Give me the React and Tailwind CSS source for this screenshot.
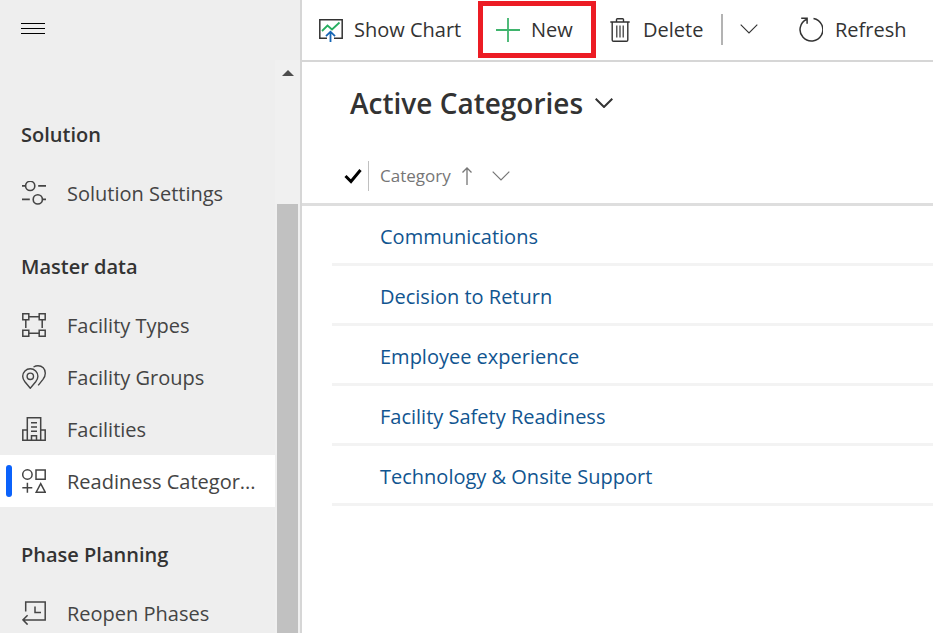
function Icon({ children, className = "", w = 24, h = 24, sw = 1.4 }) {
  return (
    <svg
      className={"shrink-0 " + className}
      width={w}
      height={h}
      viewBox={`0 0 ${w} ${h}`}
      fill="none"
      stroke="currentColor"
      strokeWidth={sw}
      aria-hidden="true"
    >
      {children}
    </svg>
  );
}

const SettingsIcon = () => (
  <Icon sw={1.6}>
    <circle cx="8.200" cy="4.900" r="4.600" />
    <path d="M0 4.900h3.600M16.200 4.900H24" />
    <circle cx="15.800" cy="18.400" r="4.600" />
    <path d="M0 18.400h7.800M20.400 18.400H24" />
  </Icon>
);

const TypesIcon = () => (
  <Icon sw={1.5}>
    <path d="M.8.8h6v6h-6zM17.2.8h6v6h-6zM.8 17.2h6v6h-6zM17.2 17.2h6v6h-6z" />
    <path d="M6.800 3.800h10.400M6.800 20.200h10.400M3.800 6.800v8.200M20.200 6.800v8.200" />
  </Icon>
);

const PinsIcon = () => (
  <Icon>
    <path d="M8.3 23.2L2.9 16.8C1.4 14.900.7 13.4.7 11.300a7.600 7.600 0 0 1 15.200 0c0 2.100-.7 3.600-2.200 5.500z" />
    <circle cx="8.3" cy="11.300" r="3.200" />
    <path d="M11.500 2C13.200 1 14.600.7 16 .7c4.200 0 7.300 3.200 7.300 7.500 0 2.400-.8 4.200-2.300 6.200l-4.800 6" />
  </Icon>
);

const BuildingIcon = () => (
  <Icon sw={1.5}>
    <path d="M5.300 23.200V.8h13.400v22.400M5.300 13H.8v10.200h22.400V13h-4.500" />
    <path d="M9 5.700h6M9 10h6M9 14.300h6M9.500 23v-4.300h5V23" />
  </Icon>
);

const ShapesIcon = () => (
  <Icon sw={1.5}>
    <circle cx="5.400" cy="5.500" r="4.700" />
    <path d="M14 .9h9.200v9.300H14zM5.400 13.700v10M.3 18.700h10M18.700 14.700l4.500 8.500h-9z" />
  </Icon>
);

const ReopenIcon = () => (
  <Icon sw={1.5}>
    <path d="M3.700 10.500V.9h19.500v18H1M5.600 14.200L.9 18.900l4.700 4.700M13 5.500v6h6" />
  </Icon>
);

const Chevron = ({ sw = 1.2, className = "" }) => (
  <Icon w={18} h={10} sw={sw} className={className}>
    <path d="M.7.7L9 9 17.300.7" />
  </Icon>
);

const sections = [
  { title: "Solution", items: [{ label: "Solution Settings", icon: SettingsIcon }] },
  {
    title: "Master data",
    items: [
      { label: "Facility Types", icon: TypesIcon },
      { label: "Facility Groups", icon: PinsIcon },
      { label: "Facilities", icon: BuildingIcon },
      { label: "Readiness Categor...", icon: ShapesIcon, active: true },
    ],
  },
  { title: "Phase Planning", items: [{ label: "Reopen Phases", icon: ReopenIcon }] },
];

const categories = [
  "Communications",
  "Decision to Return",
  "Employee experience",
  "Facility Safety Readiness",
  "Technology & Onsite Support",
];

function Sidebar() {
  return (
    <aside className="flex w-[302px] shrink-0 flex-col border-r-2 border-[#d6d6d6] bg-[#eeeeee]">
      <div className="flex h-[60px] shrink-0 items-start px-[21px] pt-[23px]">
        <button type="button" aria-label="Site map" className="flex w-6 flex-col gap-1">
          <span className="h-px w-full bg-black" />
          <span className="h-px w-full bg-black" />
          <span className="h-px w-full bg-black" />
        </button>
      </div>
      <div className="flex min-h-0 flex-1">
        <nav className="flex min-w-0 flex-1 flex-col gap-4 overflow-hidden pt-[43px]">
          {sections.map((s) => (
            <section key={s.title} className="shrink-0">
              <h2 className="flex h-16 items-center px-[21px] text-[20px] font-semibold text-[#333333]">
                {s.title}
              </h2>
              <ul>
                {s.items.map(({ label, icon: Glyph, active }) => (
                  <li key={label}>
                    <a
                      href="#"
                      aria-current={active ? "page" : undefined}
                      className={
                        "relative flex h-[52px] items-center gap-[21px] pl-[22px] text-[20px] text-[#444444] " +
                        (active ? "bg-white" : "")
                      }
                    >
                      {active && (
                        <span className="absolute top-[10px] left-[6px] h-8 w-[6px] rounded-full bg-[#0b62fb]" />
                      )}
                      <Glyph />
                      <span className="pt-[2px] whitespace-nowrap">{label}</span>
                    </a>
                  </li>
                ))}
              </ul>
            </section>
          ))}
        </nav>
        <div className="flex w-[25px] flex-col bg-[#f0f0f0] pr-[2px] pl-[2px]">
          <div className="flex h-[144px] shrink-0 items-start justify-center pt-[10px]">
            <svg width="12" height="6" viewBox="0 0 12 6" aria-hidden="true">
              <path d="M6 0l6 6H0z" fill="#4d4d4d" />
            </svg>
          </div>
          <div className="flex-1 bg-[#c1c1c1]" />
        </div>
      </div>
    </aside>
  );
}

function Toolbar() {
  return (
    <div className="flex h-[62px] shrink-0 items-center border-b-2 border-[#d6d6d6] pb-px pl-[17px] text-[20px] whitespace-nowrap text-[#333333]">
      <button type="button" className="flex w-[159px] items-center gap-[11px]">
        <Icon sw={1.5}>
          <path d="M8 20.200H.8V1.800h22.400v18.400H15" />
          <path d="M3 13l5.500-5.500 4.500 4 7.500-7" stroke="#27ae60" strokeWidth="1.800" />
          <path d="M11.500 24V14M7 18.200l4.500-4.500 4.500 4.500" stroke="#1565b5" strokeWidth="1.800" />
        </Icon>
        Show Chart
      </button>
      <button
        type="button"
        className="flex h-[57px] w-[118px] items-center gap-[11px] border-[5px] border-[#ec1c24] pl-[13px]"
      >
        <Icon sw={1.8} className="text-[#3fb46d]">
          <path d="M12 0v24M0 12h24" />
        </Icon>
        New
      </button>
      <button type="button" className="ml-[14px] flex w-[111px] items-center gap-[13px]">
        <Icon w={20}>
          <path d="M.3 4h19.400M6.500 4V1.600q0-.9.900-.9h5.200q.9 0 .9.900V4M2.200 4v18q0 1.300 1.300 1.300h13q1.300 0 1.300-1.300V4" />
          <path d="M6.800 7.500v12M10 7.500v12M13.200 7.500v12" strokeWidth="1.200" />
        </Icon>
        Delete
      </button>
      <span className="h-[31px] w-[2px] bg-[#b3b3b3]" />
      <button type="button" aria-label="More delete options" className="ml-[17px] pb-[2px]">
        <Chevron sw={1.1} />
      </button>
      <button type="button" className="ml-10 flex items-center gap-3">
        <Icon w={25} h={25} sw={1.5}>
          <path d="M15.500 1.400A11.400 11.400 0 1 1 8.800 2.200M3.200 1.200h5.900v5.600" />
        </Icon>
        Refresh
      </button>
    </div>
  );
}

function CategoryTable() {
  return (
    <table className="w-full border-separate border-spacing-0 text-left">
      <thead>
        <tr className="h-[60px] text-[#767676]">
          <th className="w-[30px] border-b-[3px] border-[#dedede] p-0" />
          <th className="w-12 border-b-[3px] border-[#dedede] p-0 pt-[2px]">
            <div className="flex h-[30px] w-[37px] items-center border-r border-[#c0c0c0] pl-[12px]">
              <button type="button" aria-label="Select all" className="text-black">
                <Icon w={18} h={16} sw={3}>
                  <path d="M1.500 8l5.500 5.500L16.500 2" />
                </Icon>
              </button>
            </div>
          </th>
          <th className="border-b-[3px] border-[#dedede] p-0 pt-[2px] text-[17px] font-normal">
            <button type="button" className="flex items-center">
              Category
              <Icon w={10} h={18} sw={1.3} className="ml-[11px]">
                <path d="M5 18V1M.5 5.500L5 1l4.500 4.500" />
              </Icon>
              <Chevron sw={1.2} className="ml-5" />
            </button>
          </th>
        </tr>
      </thead>
      <tbody>
        {categories.map((c) => (
          <tr key={c} className="h-[60px]">
            <td className="p-0" />
            <td className="border-b-[3px] border-[#f3f3f3] p-0" />
            <td className="border-b-[3px] border-[#f3f3f3] p-0 pt-1 text-[20px]">
              <a href="#" className="text-[#115590]">
                {c}
              </a>
            </td>
          </tr>
        ))}
      </tbody>
    </table>
  );
}

export default function App() {
  return (
    <div className="flex h-screen overflow-hidden bg-white font-['Segoe_UI','Open_Sans','Noto_Sans',sans-serif]">
      <Sidebar />
      <main className="flex min-w-0 flex-1 flex-col">
        <Toolbar />
        <h1 className="flex h-[84px] shrink-0 items-center pb-[2px] pl-12 text-[28px] font-semibold text-[#333333]">
          <button type="button" className="flex items-center gap-3">
            Active Categories
            <Chevron sw={2} />
          </button>
        </h1>
        <CategoryTable />
      </main>
    </div>
  );
}
